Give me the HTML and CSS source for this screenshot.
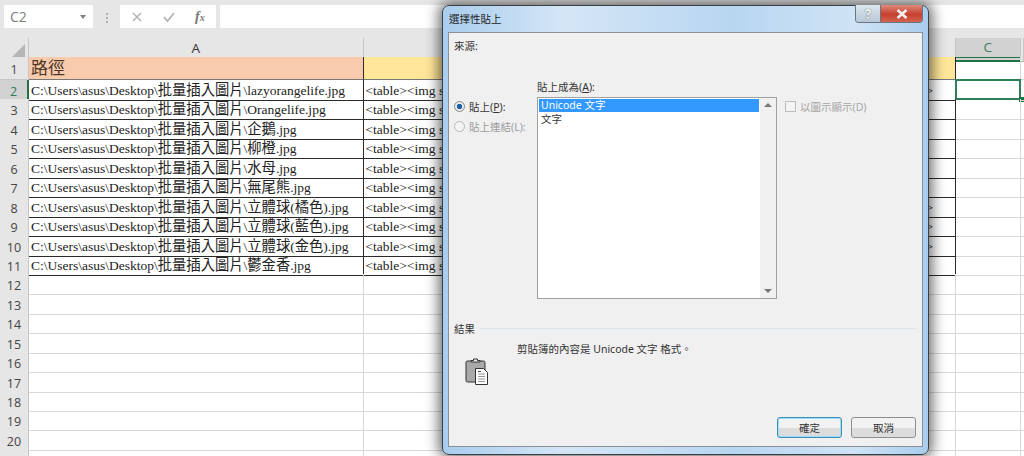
FILE: index.html
```html
<!DOCTYPE html>
<html lang="zh-Hant">
<head>
<meta charset="utf-8">
<title>選擇性貼上</title>
<link rel="stylesheet" href="styles.css">
</head>
<body>
<div class="app">
  <div class="fbar">
    <div class="namebox"><span>C2</span><i class="caret"></i></div>
    <div class="dots"></div>
    <div class="fbtns">
      <svg width="12" height="12" viewBox="0 0 12 12"><path d="M2 2l8 8M10 2l-8 8" stroke="#b4b4b4" stroke-width="1.6" fill="none"/></svg>
      <svg width="14" height="12" viewBox="0 0 14 12"><path d="M2 6l3.500 4L12 2" stroke="#b4b4b4" stroke-width="1.800" fill="none"/></svg>
      <span class="fx">f<small>x</small></span>
    </div>
    <div class="finput"></div>
  </div>
  <div class="sheet">
    <div class="row colhead">
      <div class="rh corner"><svg width="14" height="14" viewBox="0 0 14 14"><path d="M14 0v14H0z" fill="#b5b5b5"/></svg></div>
      <div class="ch">A</div><div class="ch"></div><div class="ch sel">C</div><div class="ch"></div>
    </div>
    <div class="row first">
      <div class="rh">1</div>
      <div class="c t fill-a title">路徑</div><div class="c t fill-b"></div><div class="c c1"></div><div class="c"></div>
    </div>
    <div class="row">
      <div class="rh on">2</div>
      <div class="c t"><span>C:\Users\asus\Desktop\<span class="z">批量插入圖片</span>\lazyorangelife.jpg</span></div><div class="c t b">&lt;table&gt;&lt;img src<b>&gt;</b></div><div class="c cur"><i class="handle"></i></div><div class="c"></div>
    </div>
    <div class="row">
      <div class="rh">3</div>
      <div class="c t"><span>C:\Users\asus\Desktop\<span class="z">批量插入圖片</span>\Orangelife.jpg</span></div><div class="c t b">&lt;table&gt;&lt;img src</div><div class="c"></div><div class="c"></div>
    </div>
    <div class="row">
      <div class="rh">4</div>
      <div class="c t"><span>C:\Users\asus\Desktop\<span class="z">批量插入圖片</span>\<span class="z">企鵝</span>.jpg</span></div><div class="c t b">&lt;table&gt;&lt;img src</div><div class="c"></div><div class="c"></div>
    </div>
    <div class="row">
      <div class="rh">5</div>
      <div class="c t"><span>C:\Users\asus\Desktop\<span class="z">批量插入圖片</span>\<span class="z">柳橙</span>.jpg</span></div><div class="c t b">&lt;table&gt;&lt;img src</div><div class="c"></div><div class="c"></div>
    </div>
    <div class="row">
      <div class="rh">6</div>
      <div class="c t"><span>C:\Users\asus\Desktop\<span class="z">批量插入圖片</span>\<span class="z">水母</span>.jpg</span></div><div class="c t b">&lt;table&gt;&lt;img src</div><div class="c"></div><div class="c"></div>
    </div>
    <div class="row">
      <div class="rh">7</div>
      <div class="c t"><span>C:\Users\asus\Desktop\<span class="z">批量插入圖片</span>\<span class="z">無尾熊</span>.jpg</span></div><div class="c t b">&lt;table&gt;&lt;img src</div><div class="c"></div><div class="c"></div>
    </div>
    <div class="row">
      <div class="rh">8</div>
      <div class="c t"><span>C:\Users\asus\Desktop\<span class="z">批量插入圖片</span>\<span class="z">立體球</span>(<span class="z">橘色</span>).jpg</span></div><div class="c t b">&lt;table&gt;&lt;img src<b>&gt;</b></div><div class="c"></div><div class="c"></div>
    </div>
    <div class="row">
      <div class="rh">9</div>
      <div class="c t"><span>C:\Users\asus\Desktop\<span class="z">批量插入圖片</span>\<span class="z">立體球</span>(<span class="z">藍色</span>).jpg</span></div><div class="c t b">&lt;table&gt;&lt;img src<b>&gt;</b></div><div class="c"></div><div class="c"></div>
    </div>
    <div class="row">
      <div class="rh">10</div>
      <div class="c t"><span>C:\Users\asus\Desktop\<span class="z">批量插入圖片</span>\<span class="z">立體球</span>(<span class="z">金色</span>).jpg</span></div><div class="c t b">&lt;table&gt;&lt;img src<b>&gt;</b></div><div class="c"></div><div class="c"></div>
    </div>
    <div class="row">
      <div class="rh">11</div>
      <div class="c t"><span>C:\Users\asus\Desktop\<span class="z">批量插入圖片</span>\<span class="z">鬱金香</span>.jpg</span></div><div class="c t b">&lt;table&gt;&lt;img src</div><div class="c"></div><div class="c"></div>
    </div>
    <div class="row"><div class="rh">12</div><div class="c"></div><div class="c"></div><div class="c"></div><div class="c"></div></div>
    <div class="row"><div class="rh">13</div><div class="c"></div><div class="c"></div><div class="c"></div><div class="c"></div></div>
    <div class="row"><div class="rh">14</div><div class="c"></div><div class="c"></div><div class="c"></div><div class="c"></div></div>
    <div class="row"><div class="rh">15</div><div class="c"></div><div class="c"></div><div class="c"></div><div class="c"></div></div>
    <div class="row"><div class="rh">16</div><div class="c"></div><div class="c"></div><div class="c"></div><div class="c"></div></div>
    <div class="row"><div class="rh">17</div><div class="c"></div><div class="c"></div><div class="c"></div><div class="c"></div></div>
    <div class="row"><div class="rh">18</div><div class="c"></div><div class="c"></div><div class="c"></div><div class="c"></div></div>
    <div class="row"><div class="rh">19</div><div class="c"></div><div class="c"></div><div class="c"></div><div class="c"></div></div>
    <div class="row"><div class="rh">20</div><div class="c"></div><div class="c"></div><div class="c"></div><div class="c"></div></div>
    <div class="row"><div class="rh"></div><div class="c"></div><div class="c"></div><div class="c"></div><div class="c"></div></div>
  </div>
</div>

<div class="dialog">
  <div class="titlebar">
    <span class="dtitle">選擇性貼上</span>
    <div class="winbtns">
      <div class="wb help">?</div>
      <div class="wb close"><svg width="14" height="10" viewBox="0 0 14 10"><path d="M2.500 1l9 8M11.500 1l-9 8" stroke="#f1f1f1" stroke-width="2.600" fill="none"/></svg></div>
    </div>
  </div>
  <div class="panel">
    <div class="source">來源:</div>
    <div class="main">
      <div class="radios">
        <div class="radio"><i class="dot on"></i><span>貼上(<u>P</u>):</span></div>
        <div class="radio off"><i class="dot"></i><span>貼上連結(L):</span></div>
      </div>
      <div class="listcol">
        <div class="lbl">貼上成為(<u>A</u>):</div>
        <div class="list">
          <div class="items">
            <div class="item selitem">Unicode 文字</div>
            <div class="item">文字</div>
          </div>
          <div class="scroll"><i class="up"></i><i class="down"></i></div>
        </div>
      </div>
      <div class="check"><i class="box"></i><span>以圖示顯示(D)</span></div>
    </div>
    <div class="legend"><span>結果</span><i class="rule"></i></div>
    <div class="msg">剪貼簿的內容是 Unicode 文字 格式。</div>
    <svg class="clip" width="24" height="28" viewBox="0 0 24 28">
      <rect x="1" y="3" width="19" height="21" rx="1.500" fill="#a9a9a9" stroke="#333"/>
      <path d="M6 4V2.500h2.500V1h4v1.500H15V4z" fill="#eee" stroke="#333"/>
      <path d="M10.500 10.500h8l4 4v12h-12z" fill="#fff" stroke="#333"/>
      <path d="M13 16h7M13 18.500h7M13 21h7M13 23.500h7" stroke="#999"/>
      <path d="M13 13.500h3" stroke="#444"/>
    </svg>
    <div class="actions">
      <div class="btn default">確定</div>
      <div class="btn">取消</div>
    </div>
  </div>
</div>
</body>
</html>
```
FILE: styles.css
```css
* { box-sizing: border-box; }
html, body { margin: 0; height: 456px; overflow: hidden; background: #fff; }
.app { width: 1024px; }

.fbar { display: flex; align-items: flex-start; height: 38px; padding: 5px 0 0 4px; background: #e6e6e6; font-family: "Open Sans", "Liberation Sans", sans-serif; }
.namebox { display: flex; align-items: center; justify-content: space-between; width: 89px; height: 23px; padding: 0 7px 0 6px; background: #fff; font-size: 14px; color: #808080; }
.caret { width: 0; height: 0; border: 3.500px solid transparent; border-top: 4px solid #808080; border-bottom: 0; }
.dots { width: 27px; height: 23px; background-repeat: no-repeat; background-image: linear-gradient(#b0b0b0, #b0b0b0), linear-gradient(#b0b0b0, #b0b0b0), linear-gradient(#b0b0b0, #b0b0b0); background-size: 2px 2px; background-position: 13px 8px, 13px 12px, 13px 16px; }
.fbtns { display: flex; align-items: center; gap: 19px; width: 96px; height: 23px; padding-left: 11px; background: #fff; }
.fx { font-family: "Liberation Serif", serif; font-style: italic; font-weight: 700; font-size: 14px; color: #777; }
.fx small { font-size: 10px; }
.finput { flex: 1; height: 23px; margin-left: 4px; background: #fff; }

.sheet { font-family: "Liberation Serif", "Noto Sans CJK TC", serif; font-size: 13.500px; color: #222; }
.z { font-size: 14.300px; }
.row { display: grid; grid-template-columns: 29px 334.500px 592.500px 64.500px 1fr; height: 19.450px; }
.colhead { height: 19px; }
.first { height: 23px; }
.rh, .ch { display: flex; align-items: center; justify-content: center; background: #e6e6e6; font-family: "Open Sans", "Liberation Sans", sans-serif; font-size: 12.500px; color: #444; border-right: 1px solid #c6c6c6; border-bottom: 1px solid #c6c6c6; }
.rh { padding-top: 3px; }
.ch { padding-bottom: 4px; font-size: 13.500px; color: #333; }
.colhead .rh, .colhead .ch { border-bottom: 1px solid #ababab; }
.corner { align-items: flex-end; justify-content: flex-end; padding: 0 3px 3px 0; }
.ch.sel { background: #d2d2d2; color: #3f7d60; border-bottom: 2px solid #217346; }
.rh.on { background: #d2d2d2; color: #2d7d57; border-right: 2px solid #217346; }
.c { position: relative; display: flex; align-items: center; justify-content: space-between; min-width: 0; overflow: hidden; white-space: nowrap; padding: 1px 2px 0; line-height: 17px; border-right: 1px solid #d8d8d8; border-bottom: 1px solid #d8d8d8; }
.t { border-right: 1px solid #2a2a2a; border-bottom: 1px solid #2a2a2a; }
.fill-a { background: #f8cbad; }
.fill-b { background: #ffe699; }
.title { font-size: 17px; color: #4b3525; padding-top: 1px; border-bottom-color: #777; }
.fill-b { border-bottom-color: #777; }
.b { padding-right: 22px; }
.b b { font-weight: 400; }
.c1 { box-shadow: inset 0 1px 0 #217346; }
.cur { overflow: visible; border: 2px solid #2e8058; margin: -1px 0 -1px -1px; height: 21px; }
.handle { position: absolute; right: -5px; bottom: -4px; width: 5px; height: 5px; background: #217346; }

.dialog { position: absolute; left: 442px; top: 5px; width: 487px; height: 450px; display: flex; flex-direction: column; padding: 0 5px 7px; border: 1px solid #3a3f45; border-radius: 7px; background: linear-gradient(90deg, #a9cdee, #d4e6f6 25%, #b8d6f1 60%, #cfe3f5 85%, #a9cdee); box-shadow: 0 0 14px 3px rgba(0, 0, 0, .6); font-family: "Noto Sans", "Noto Sans CJK TC", sans-serif; font-size: 10.500px; color: #333; }
.titlebar { display: flex; justify-content: space-between; height: 26px; flex: none; }
.dtitle { padding: 4px 0 0 1px; line-height: 18px; color: #222; }
.winbtns { display: flex; height: 18px; margin: -1px 0 0; border: 1px solid #6a7580; border-top: 0; border-radius: 0 0 4px 4px; overflow: hidden; }
.wb { display: flex; align-items: center; justify-content: center; font-weight: 700; }
.help { width: 25px; background: linear-gradient(#dbe6f0, #b8c8d6); color: #f2f2f2; text-shadow: 0 0 1px #333; font-size: 14px; border-right: 1px solid #6a7580; }
.close { width: 41px; background: linear-gradient(#e08a7c, #c6402f 55%, #d4614f); }
.panel { flex: 1; display: flex; flex-direction: column; padding: 5px 5px 8px; background: #f0f0f0; border: 1px solid #8b9096; }
.source { height: 16px; line-height: 16px; }
.main { display: grid; grid-template-columns: 83px 240px 1fr; margin-top: 25px; }
.radios { display: flex; flex-direction: column; gap: 4px; padding-top: 19px; }
.radio { display: flex; align-items: center; gap: 4px; height: 16px; white-space: nowrap; }
.radio.off { color: #9c9c9c; }
.dot { flex: none; width: 11px; height: 11px; border-radius: 50%; border: 1px solid #b9b9b9; background: #f4f4f4; }
.dot.on { border-color: #8a8a8a; background: radial-gradient(circle, #1b5fa8 0 2.500px, #eaeaea 3px); }
.lbl { height: 18px; line-height: 16px; }
.list { display: flex; height: 202px; background: #fff; border: 1px solid #a0a0a0; }
.items { flex: 1; padding: 1px; }
.item { height: 13px; padding-left: 2px; line-height: 13px; margin-bottom: 1px; white-space: nowrap; }
.selitem { background: #3399ff; color: #fff; }
.scroll { position: relative; width: 16px; background: #f0f0f0; }
.up, .down { position: absolute; left: 4px; width: 0; height: 0; border: 4px solid transparent; }
.up { top: 5px; border-bottom: 4px solid #777; border-top: 0; }
.down { bottom: 5px; border-top: 4px solid #777; border-bottom: 0; }
.check { display: flex; align-items: center; gap: 4px; height: 16px; margin: 19px 0 0 8px; color: #a6a6a6; white-space: nowrap; }
.box { width: 11px; height: 11px; border: 1px solid #bdbdbd; background: #f4f4f4; }
.legend { display: flex; align-items: center; gap: 5px; height: 16px; margin-top: 21px; }
.rule { flex: 1; height: 1px; background: #dbe4ea; }
.msg { height: 16px; line-height: 16px; margin: 5px 0 0 63px; }
.clip { display: block; flex: none; margin: 1px 0 0 11px; }
.actions { display: flex; justify-content: flex-end; gap: 9px; margin: auto 1px 0 0; }
.btn { display: flex; align-items: center; justify-content: center; width: 65px; height: 21px; border: 1px solid #8f8f8f; border-radius: 3px; background: linear-gradient(#f2f2f2 50%, #dcdcdc 50%); }
.btn.default { border: 1px solid #3c8fb8; box-shadow: inset 0 0 0 1px #9fdcf5; }
```
